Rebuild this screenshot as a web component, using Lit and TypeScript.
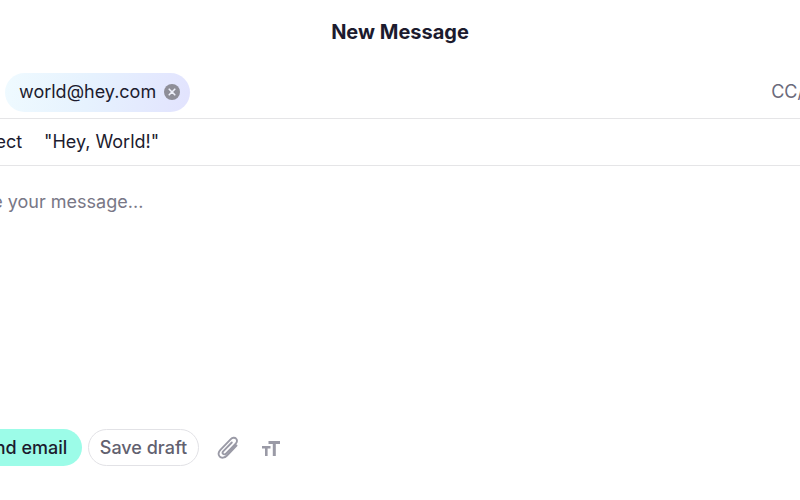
import { LitElement, html, css } from "lit";
import { customElement } from "lit/decorators.js";

@customElement("app-root")
export class AppRoot extends LitElement {
  static styles = css`
    :host {
      display: block;
      width: 800px;
      height: 500px;
      overflow: hidden;
      background: #fff;
      font-family: Inter, "Liberation Sans", sans-serif;
      color: #1c1b2e;
    }
    .title {
      height: 65px;
      padding-top: 20px;
      box-sizing: border-box;
      margin: 0;
      text-align: center;
      font-size: 20px;
      line-height: 24px;
      font-weight: 700;
    }
    .sheet {
      margin-left: -42px;
      width: 884px;
      display: flex;
      flex-direction: column;
      height: 435px;
    }
    .line {
      display: flex;
      align-items: center;
      font-size: 18px;
      line-height: 24px;
    }
    .to {
      height: 53px;
      border-bottom: 1px solid #e5e5e7;
      box-sizing: content-box;
      justify-content: space-between;
    }
    .left { display: flex; align-items: center; }
    .label { width: 47px; }
    .chip {
      display: flex;
      align-items: center;
      gap: 8px;
      height: 39px;
      margin-top: 1px;
      padding: 0 10px 0 14px;
      border-radius: 20px;
      background: linear-gradient(100deg, #effaff 0%, #e6f2fe 45%, #e2e3fe 100%);
    }
    .x { display: block; width: 16px; height: 16px; }
    .cc { color: #6b6a7b; }
    .subject {
      height: 46px;
      border-bottom: 1px solid #e5e5e7;
    }
    .subject .label { width: 86px; }
    .body {
      flex: 1;
      padding-top: 24px;
      font-size: 18px;
      line-height: 24px;
      color: #787786;
    }
    .actions {
      display: flex;
      align-items: center;
      height: 37px;
      margin-bottom: 34px;
      font-size: 18px;
    }
    .send {
      height: 37px;
      width: 124px;
      display: flex;
      align-items: center;
      justify-content: center;
      border-radius: 19px;
      background: #9cfce8;
      font-weight: 500;
      margin-right: 6px;
    }
    .draft {
      height: 37px;
      box-sizing: border-box;
      width: 111px;
      display: flex;
      align-items: center;
      justify-content: center;
      border: 1px solid #e2e2e6;
      border-radius: 19px;
      color: #62616f;
      font-weight: 500;
      margin-right: 16px;
    }
    .clip { display: block; width: 26px; height: 26px; margin-right: 21px; }
    .tt { display: block; width: 18px; height: 16px; }
  `;

  render() {
    return html`
      <h1 class="title">New Message</h1>
      <div class="sheet">
        <div class="line to">
          <div class="left">
            <span class="label">To</span>
            <span class="chip">
              world@hey.com
              <svg class="x" viewBox="0 0 16 16">
                <circle cx="8" cy="8" r="8" fill="#8e8e98" />
                <path d="M5.2 5.2 10.8 10.8M10.8 5.2 5.2 10.8" stroke="#eef0fa" stroke-width="1.6" stroke-linecap="round" fill="none" />
              </svg>
            </span>
          </div>
          <span class="cc">CC/BCC</span>
        </div>
        <div class="line subject">
          <span class="label">Subject</span>
          <span>"Hey, World!"</span>
        </div>
        <div class="body">Write your message...</div>
        <div class="actions">
          <div class="send">Send email</div>
          <div class="draft">Save draft</div>
          <svg class="clip" viewBox="0 0 26 26" fill="none" stroke="#9a9aa6" stroke-width="1.9" stroke-linecap="round" stroke-linejoin="round">
            <path d="M21.5 10.5 12 20.5c-2.4 2.5-5.6 2.8-7.3 1.1-1.8-1.7-1.4-4.5.7-6.7L15.8 4.2c1.6-1.7 4-1.9 5.3-.6 1.4 1.3 1.1 3.4-.4 5l-9.7 10c-.9.9-2.2 1-2.9.3-.7-.7-.6-1.9.3-2.8l8.4-8.6" />
          </svg>
          <svg class="tt" viewBox="0 0 18 16" fill="#9a9aa6">
            <path d="M6.5 1H18v3h-4.2v12h-3V4H6.5z" />
            <path d="M0 6h8.5v2.4H5.6V16H3V8.4H0z" />
          </svg>
        </div>
      </div>
    `;
  }
}
